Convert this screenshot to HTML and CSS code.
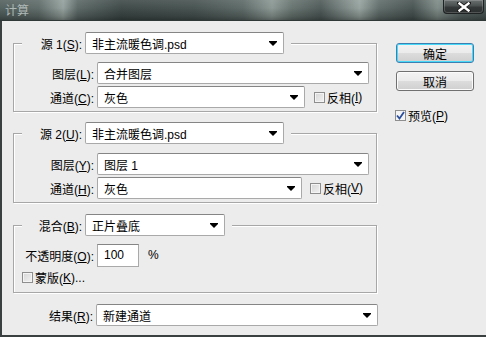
FILE: index.html
```html
<!DOCTYPE html>
<html lang="zh">
<head>
<meta charset="utf-8">
<title>计算</title>
<link rel="stylesheet" href="styles.css">
</head>
<body>
<div class="window">
  <div class="titlebar">
    <span class="title">计算</span>
    <div class="close">
      <svg width="14" height="10" viewBox="0 0 14 10"><path d="M2 1 L12 9 M12 1 L2 9" stroke="#1a1a1a" stroke-width="4" stroke-linecap="square"/><path d="M2.5 1.5 L11.5 8.5 M11.5 1.5 L2.5 8.5" stroke="#ffffff" stroke-width="2.4" stroke-linecap="square"/></svg>
    </div>
  </div>
  <div class="client">
    <div class="main">
      <fieldset class="group g1">
        <legend><span class="lg"><span class="lbl lg-lbl">源 1(<u>S</u>):</span><span class="sel w198">非主流暖色调.psd<i class="arr"></i></span></span></legend>
        <div class="row"><span class="lbl">图层(<u>L</u>):</span><span class="sel w272">合并图层<i class="arr"></i></span></div>
        <div class="row"><span class="lbl">通道(<u>C</u>):</span><span class="sel w208">灰色<i class="arr"></i></span><span class="chk-wrap c1"><span class="chk"></span>反相(<u>I</u>)</span></div>
      </fieldset>
      <fieldset class="group g2">
        <legend><span class="lg"><span class="lbl lg-lbl">源 2(<u>U</u>):</span><span class="sel w198">非主流暖色调.psd<i class="arr"></i></span></span></legend>
        <div class="row"><span class="lbl">图层(<u>Y</u>):</span><span class="sel w272">图层 1<i class="arr"></i></span></div>
        <div class="row"><span class="lbl">通道(<u>H</u>):</span><span class="sel w205">灰色<i class="arr"></i></span><span class="chk-wrap c2"><span class="chk"></span>反相(<u>V</u>)</span></div>
      </fieldset>
      <fieldset class="group g3">
        <legend><span class="lg"><span class="lbl lg-lbl">混合(<u>B</u>):</span><span class="sel w140">正片叠底<i class="arr"></i></span></span></legend>
        <div class="row"><span class="lbl">不透明度(<u>O</u>):</span><span class="inp">100</span><span class="pct">%</span></div>
        <div class="row small"><span class="chk-wrap c3"><span class="chk"></span>蒙版(<u>K</u>)...</span></div>
      </fieldset>
      <div class="row result"><span class="lbl">结果(<u>R</u>):</span><span class="sel w282">新建通道<i class="arr"></i></span></div>
    </div>
    <div class="side">
      <div class="btn default">确定</div>
      <div class="btn">取消</div>
      <div class="chk-wrap preview"><span class="chk checked"><svg width="9" height="9" viewBox="0 0 9 9"><path d="M1 4.5 L3.5 7.5 L8 1" fill="none" stroke="#2a4f9e" stroke-width="1.8"/></svg></span>预览(<u>P</u>)</div>
    </div>
  </div>
</div>
</body>
</html>
```

FILE: styles.css
```css
* { box-sizing: border-box; }
html, body { margin: 0; padding: 0; }
body {
  width: 486px;
  height: 337px;
  overflow: hidden;
  background: #ececec;
  font-family: "Liberation Sans", "Noto Sans CJK SC", sans-serif;
  font-size: 12px;
  color: #000;
}
u { text-decoration: underline; text-underline-offset: 1px; }

.window { width: 486px; height: 337px; display: flex; flex-direction: column; }

.titlebar {
  height: 21px;
  flex: none;
  display: flex;
  align-items: flex-start;
  justify-content: space-between;
  background:
    linear-gradient(to bottom, rgba(255,255,255,0.10) 0%, rgba(255,255,255,0.02) 40%, rgba(0,0,0,0.18) 80%, rgba(0,0,0,0.35) 100%),
    linear-gradient(to right, #52605e 0%, #5e6b68 8%, #93a09c 13%, #5a6765 16%, #3d4947 25%, #465250 40%, #5c6966 50%, #8a9793 56%, #66736f 60%, #4e5a58 66%, #95a29e 74%, #5f6c69 78%, #475351 85%, #7d8a86 90%, #556260 95%, #4a5654 100%);
  border-bottom: 1px solid #2f3837;
}
.title {
  color: #aeb8b6;
  font-size: 12px;
  line-height: 12px;
  padding: 4px 0 0 5px;
  font-family: "Noto Sans CJK SC", sans-serif;
}
.close {
  width: 41px;
  height: 14px;
  margin-right: 2px;
  display: flex;
  align-items: center;
  justify-content: center;
  background: linear-gradient(to bottom, #6a6f6f 0%, #4a4f4f 45%, #343838 55%, #2c2f2f 100%);
  border: 1px solid #1e2222;
  border-top: none;
  border-radius: 0 0 4px 4px;
  box-shadow: inset 0 0 0 1px rgba(255,255,255,0.18);
}

.client {
  flex: 1;
  display: flex;
  align-items: flex-start;
  border-left: 2px solid #3a3f3f;
  border-bottom: 2px solid #3a3f3f;
  padding: 11px 0 0 11px;
}
.main { width: 365px; display: flex; flex-direction: column; }

.group {
  margin: 0;
  padding: 8px 0 3px 0;
  width: 364px;
  min-width: 0;
  border: 1px solid #a7a7a7;
  box-shadow: inset 1px 1px 0 #fff, 1px 1px 0 #fff;
}
.group legend {
  margin-left: 8px;
  padding: 0 7px 0 0;
  background: #ececec;
}
.lg { display: flex; align-items: center; }
.g2 { margin-top: 10px; padding-top: 9px; }
.g3 { margin-top: 11px; padding-top: 8px; padding-bottom: 8px; }

.row { display: flex; align-items: center; height: 22px; }
.row + .row { margin-top: 2px; }
.row.small { height: 13px; margin-top: 5px; }

.lbl {
  width: 83px;
  padding-right: 3px;
  text-align: right;
  white-space: nowrap;
  flex: none;
}
.lg-lbl { width: 63px; }

.sel {
  position: relative;
  height: 22px;
  display: flex;
  align-items: center;
  padding-left: 6px;
  background: #fff;
  border: 1px solid #a9a9a9;
  border-top-color: #858585;
  border-radius: 2px;
  flex: none;
  white-space: nowrap;
}
.arr {
  position: absolute;
  right: 6px;
  top: 9px;
  width: 0;
  height: 0;
  border-left: 4px solid transparent;
  border-right: 4px solid transparent;
  border-top: 4px solid #000;
}
.arr::before {
  content: "";
  position: absolute;
  left: -4px;
  top: -5px;
  width: 8px;
  height: 1px;
  background: #000;
}
.w198 { width: 199px; }
.w272 { width: 272px; }
.w208 { width: 208px; }
.w205 { width: 205px; }
.w140 { width: 140px; }
.w282 { width: 282px; }

.inp {
  height: 23px;
  width: 42px;
  display: flex;
  align-items: center;
  padding-left: 6px;
  background: #fff;
  border: 1px solid #a9a9a9;
  border-top-color: #858585;
}
.pct { margin-left: 9px; }

.chk-wrap { display: flex; align-items: center; white-space: nowrap; }
.chk {
  width: 11px;
  height: 11px;
  margin-right: 2px;
  border: 1px solid #8e8e8e;
  background: linear-gradient(135deg, #d6d6d6 0%, #f2f2f2 100%);
  box-shadow: inset 0 0 0 1px #f4f4f4;
  display: flex;
  align-items: center;
  justify-content: center;
  flex: none;
}
.chk.checked { background: #f4f4f4; }
.c1 { margin-left: 9px; }
.c2 { margin-left: 8px; }
.c3 { margin-left: 8px; }

.result { margin-top: 11px; }

.side { margin-left: 18px; margin-top: 11px; display: flex; flex-direction: column; align-items: flex-start; }
.btn {
  width: 78px;
  height: 20px;
  display: flex;
  align-items: center;
  justify-content: center;
  border: 1px solid #707070;
  border-radius: 3px;
  background: linear-gradient(to bottom, #f3f3f3 0%, #ebebeb 48%, #dcdcdc 52%, #cfcfcf 100%);
  box-shadow: inset 0 0 0 1px #fbfbfb;
}
.btn + .btn { margin-top: 8px; }
.btn.default {
  border-color: #3c7fb1;
  box-shadow: inset 0 0 0 1px #48d8f8;
}
.preview { margin-top: 16px; margin-left: -1px; }
```
